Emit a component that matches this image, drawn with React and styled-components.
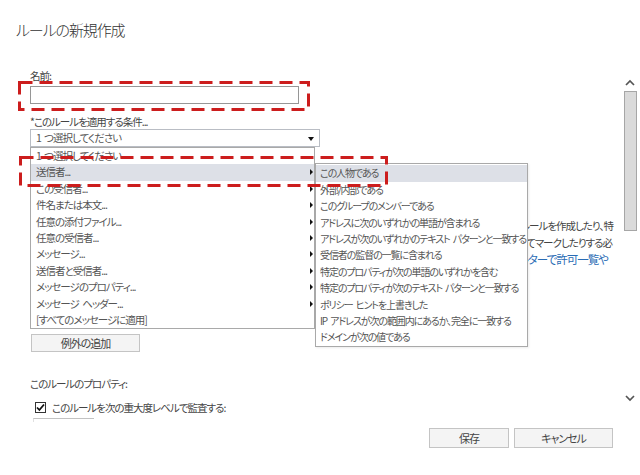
import React from 'react';
import styled, { createGlobalStyle } from 'styled-components';

const GlobalStyle = createGlobalStyle`
  html, body { margin: 0; padding: 0; background: #fff; }
  body {
    font-family: "Noto Sans CJK JP", "Liberation Sans", sans-serif;
    font-feature-settings: "palt";
    letter-spacing: -1px;
    word-spacing: 2px;
    color: #444;
  }
`;

const Page = styled.div`
  position: relative;
  display: flex;
  width: 640px;
  height: 475px;
  overflow: hidden;
`;

const Main = styled.div`
  flex: 1;
  display: flex;
  flex-direction: column;
  padding: 0 8px 27px 16px;
`;

const Title = styled.h1`
  margin: 20px 0 0;
  font-size: 15px;
  line-height: 20px;
  font-weight: 300;
  letter-spacing: -1.1px;
  color: #333;
`;

const Form = styled.div`
  display: flex;
  flex-direction: column;
  align-items: flex-start;
  padding-left: 14px;
`;

const Label = styled.div`
  margin-top: ${p => p.$top || 0}px;
  font-size: 10.5px;
  line-height: 14px;
  color: #444;
  white-space: nowrap;
`;

const TextInput = styled.div`
  margin-top: 3px;
  width: 269px;
  height: 18px;
  box-sizing: border-box;
  border: 1px solid #969696;
  background: #fff;
`;

const SelectWrap = styled.div`
  position: relative;
  z-index: 2;
`;

const Select = styled.div`
  width: 290px;
  height: 18px;
  box-sizing: border-box;
  border: 1px solid #b9bdc4;
  padding-left: 5px;
  font-size: 10.5px;
  line-height: 16px;
  color: #555;
  position: relative;
  &::after {
    content: "";
    position: absolute;
    right: 5px;
    top: 7px;
    border-left: 3.5px solid transparent;
    border-right: 3.5px solid transparent;
    border-top: 4px solid #111;
  }
`;

const List = styled.div`
  position: absolute;
  top: 100%;
  left: 0;
  width: 285px;
  box-sizing: border-box;
  border: 1px solid #a9a9a9;
  background: #fff;
`;

const Row = styled.div`
  position: relative;
  height: 16.4px;
  line-height: 16.4px;
  padding-left: ${p => p.$pad || 5}px;
  font-size: ${p => (p.$tight ? 10 : 10.5)}px;
  letter-spacing: ${p => (p.$tight ? -1.1 : -1)}px;
  color: #555;
  white-space: nowrap;
  background: ${p => (p.$active ? '#dde0e7' : 'transparent')};
  ${p => p.$arrow && `
    &::after {
      content: "";
      position: absolute;
      right: 1px;
      top: 5px;
      border-top: 3px solid transparent;
      border-bottom: 3px solid transparent;
      border-left: 3px solid #111;
    }
  `}
`;

const SubMenu = styled.div`
  position: absolute;
  left: calc(100% + 1px);
  top: -1px;
  width: 213px;
  box-sizing: border-box;
  border: 1px solid #a9a9a9;
  padding-top: 1px;
  background: #fff;
  box-shadow: 1px 1px 2px rgba(0, 0, 0, 0.08);
`;

const Para = styled.div`
  margin-top: 71px;
  align-self: stretch;
  display: flex;
  flex-direction: column;
  align-items: flex-end;
  font-size: 10.5px;
  line-height: 16.5px;
  color: #444;
  white-space: nowrap;
`;

const Line = styled.span`
  padding-right: ${p => p.$right || 0}px;
`;

const Link = styled.span`
  color: #2a6cb5;
  font-size: 11.5px;
`;

const Button = styled.button`
  width: ${p => p.$w}px;
  height: ${p => p.$h || 20}px;
  margin-top: ${p => p.$top || 0}px;
  margin-left: ${p => p.$left || 0}px;
  box-sizing: border-box;
  border: 1px solid #c4c4c4;
  background: #f4f4f4;
  font-family: inherit;
  font-feature-settings: "palt";
  letter-spacing: -1px;
  font-size: 11px;
  color: #444;
  padding: 0;
`;

const CheckRow = styled.div`
  margin-top: 10px;
  display: flex;
  align-items: center;
  gap: 6px;
  padding-left: 5px;
  font-size: 10.5px;
  line-height: 14px;
  color: #444;
`;

const Box = styled.span`
  width: 11px;
  height: 11px;
  box-sizing: border-box;
  border: 1px solid #333;
  display: flex;
  align-items: center;
  justify-content: center;
  background: #fff;
`;

const Stub = styled.div`
  margin: 3px 0 0 3px;
  width: 60px;
  height: 3px;
  border-top: 1px solid #c2c2c2;
  border-left: 1px solid #e0e0e0;
`;

const Footer = styled.div`
  margin-top: auto;
  display: flex;
  justify-content: flex-end;
  gap: 5px;
`;

const ScrollBar = styled.div`
  width: 19px;
  display: flex;
  flex-direction: column;
  align-items: center;
  padding: 79px 1px 0 0;
  box-sizing: border-box;
`;

const Thumb = styled.div`
  margin-top: 5px;
  width: 13px;
  height: 140px;
  box-sizing: border-box;
  background: #dadada;
  border: 1px solid #a6a6a6;
`;

const Overlay = styled.svg`
  position: absolute;
  left: 0;
  top: 0;
  pointer-events: none;
  z-index: 5;
`;

const Chevron = ({ up, top }) => (
  <svg width="10" height="7" viewBox="0 0 10 7" style={{ marginTop: top }}>
    <polyline
      points={up ? '1,6 5,2 9,6' : '1,1 5,5 9,1'}
      fill="none"
      stroke="#555"
      strokeWidth="1.7"
    />
  </svg>
);

const mainItems = [
  { t: '1 つ選択してください' },
  { t: '送信者...', a: true, on: true },
  { t: 'この受信者...', a: true },
  { t: '件名または本文...', a: true },
  { t: '任意の添付ファイル...', a: true },
  { t: '任意の受信者...', a: true },
  { t: 'メッセージ...', a: true },
  { t: '送信者と受信者...', a: true },
  { t: 'メッセージのプロパティ...', a: true },
  { t: 'メッセージ ヘッダー...', a: true },
  { t: '[すべてのメッセージに適用]' },
];

const subItems = [
  'この人物である',
  '外部/内部である',
  'このグループのメンバーである',
  'アドレスに次のいずれかの単語が含まれる',
  'アドレスが次のいずれかのテキスト パターンと一致する',
  '受信者の監督の一覧に含まれる',
  '特定のプロパティが次の単語のいずれかを含む',
  '特定のプロパティが次のテキスト パターンと一致する',
  'ポリシー ヒントを上書きした',
  'IP アドレスが次の範囲内にあるか、完全に一致する',
  'ドメインが次の値である',
];

const App = () => (
  <Page>
    <GlobalStyle />
    <Main>
      <Title>ルールの新規作成</Title>
      <Form>
        <Label $top={29}>名前:</Label>
        <TextInput />
        <Label $top={11}>*このルールを適用する条件...</Label>
        <SelectWrap>
          <Select>1 つ選択してください</Select>
          <List>
            {mainItems.map(item => (
              <Row key={item.t} $arrow={item.a} $active={item.on}>
                {item.t}
                {item.on && (
                  <SubMenu>
                    {subItems.map((s, i) => (
                      <Row key={s} $pad={4} $tight $active={i === 0}>{s}</Row>
                    ))}
                  </SubMenu>
                )}
              </Row>
            ))}
          </List>
        </SelectWrap>
        <Para>
          <Line>ルールを作成したり、特</Line>
          <Line $right={1}>としてマークしたりする必</Line>
          <Line $right={5}><Link>ィルターで許可一覧や</Link></Line>
        </Para>
        <Button $w={109} $h={18} $top={65} $left={1}>例外の追加</Button>
        <Label $top={25}>このルールのプロパティ:</Label>
        <CheckRow>
          <Box>
            <svg width="9" height="9" viewBox="0 0 9 9">
              <polyline points="1,4.5 3.4,7 8,1.5" fill="none" stroke="#111" strokeWidth="1.8" />
            </svg>
          </Box>
          このルールを次の重大度レベルで監査する:
        </CheckRow>
        <Stub />
      </Form>
      <Footer>
        <Button $w={80}>保存</Button>
        <Button $w={99}>キャンセル</Button>
      </Footer>
    </Main>
    <ScrollBar>
      <Chevron up />
      <Thumb />
      <Chevron top={164} />
    </ScrollBar>
    <Overlay width="640" height="475">
      <g fill="none" stroke="#cc1d1d" strokeWidth="3" strokeDasharray="13 7">
        <rect x="19.5" y="82.5" width="289" height="27" />
        <rect x="20.5" y="157.5" width="366" height="28" />
      </g>
    </Overlay>
  </Page>
);

export default App;
